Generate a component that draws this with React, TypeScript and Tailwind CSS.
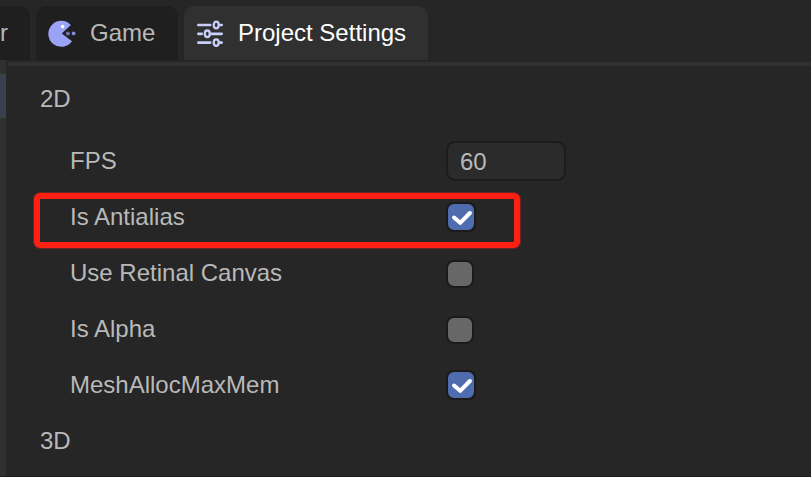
import React from "react";

function GameIcon() {
  return (
    <svg className="mt-0.5 h-[28px] w-[28px] shrink-0" viewBox="0 0 28 28">
      <path d="M13.8 13.4 L22.9 5 A13 13 0 1 0 24 21.2 Z" fill="#9aa3f5" />
      <circle cx="14.6" cy="6.6" r="1.8" fill="#fff" />
      <circle cx="19.9" cy="13.4" r="2" fill="#6f76b4" />
      <circle cx="25.6" cy="13.4" r="1.9" fill="#858ddb" />
    </svg>
  );
}

function SettingsIcon() {
  return (
    <svg
      className="mt-0.5 h-[28px] w-[28px] shrink-0"
      viewBox="0 0 28 28"
      fill="none"
      stroke="#c9cefa"
      strokeWidth="2.7"
      strokeLinecap="round"
    >
      <path d="M2.4 5H14.2M24 5H25.7M2.4 13.8H5.8M15 13.8H25.7M2.4 22.6H14.2M24 22.6H25.7" />
      <g strokeWidth="2.3">
        <ellipse cx="20.2" cy="5" rx="2.5" ry="3.3" />
        <ellipse cx="11.3" cy="13.8" rx="2.5" ry="3.3" />
        <ellipse cx="20.2" cy="22.6" rx="2.5" ry="3.3" />
      </g>
    </svg>
  );
}

function Checkbox({ checked }: { checked: boolean }) {
  if (!checked) {
    return <span className="mt-[2px] block h-7 w-7 rounded-[8px] border-2 border-[#1b1b1b] bg-[#676767]" />;
  }
  return (
    <span className="block h-[30px] w-[30px] rounded-[8px] border-2 border-[#1a1a1a] bg-[#4f6cae]">
      <svg className="h-[26px] w-[26px]" viewBox="0 0 26 26" fill="none">
        <path
          d="M6 13.5L12.2 18.8L21.9 9"
          stroke="#fff"
          strokeWidth="4"
          strokeLinecap="round"
          strokeLinejoin="round"
        />
      </svg>
    </span>
  );
}

function Row({ label, children }: { label: string; children: React.ReactNode }) {
  return (
    <div className="flex h-14 items-center pl-[62px]">
      <span className="w-[376px] shrink-0">{label}</span>
      {children}
    </div>
  );
}

export default function App() {
  return (
    <div className="relative flex h-[477px] w-[811px] flex-col overflow-hidden border-b border-[#1f1c1f] bg-[#262626] font-['Liberation_Sans',Arial,sans-serif] text-[24px] leading-7 text-[#b9b9b9]">
      <div className="flex h-[60px] shrink-0 gap-1.5 pt-1.5">
        <div className="flex w-[30px] items-center justify-end rounded-tr-[10px] bg-[#1f1f1f] pr-[22px]">r</div>
        <div className="flex w-[142px] items-center rounded-t-[10px] bg-[#1f1f1f] pl-3">
          <GameIcon />
          <span className="ml-[14px]">Game</span>
        </div>
        <div className="flex w-[244px] items-center rounded-t-[10px] bg-[#303030] pl-3 text-white">
          <SettingsIcon />
          <span className="ml-[14px] whitespace-nowrap">Project Settings</span>
        </div>
      </div>

      <div className="flex min-h-0 flex-1">
        <div className="w-1.5 shrink-0 bg-[#303030] pt-[14px]">
          <div className="h-11 bg-[#39414e]" />
        </div>
        <div className="flex-1 pl-0.5 pt-0.5">
          <div className="h-1 bg-[#303030]" />
          <div className="flex h-[67px] items-center pb-0.5 pl-8">2D</div>
          <Row label="FPS">
            <div className="flex h-10 w-[120px] items-center rounded-[9px] border-2 border-[#1c1c1c] bg-[#2b2b2b] pl-[12px] pt-0.5">
              60
            </div>
          </Row>
          <Row label="Is Antialias">
            <Checkbox checked />
          </Row>
          <Row label="Use Retinal Canvas">
            <Checkbox checked={false} />
          </Row>
          <Row label="Is Alpha">
            <Checkbox checked={false} />
          </Row>
          <Row label="MeshAllocMaxMem">
            <Checkbox checked />
          </Row>
          <div className="flex h-14 items-center pl-8">3D</div>
        </div>
      </div>

      <div className="absolute left-[34px] top-[193px] h-[55px] w-[486px] rounded-[6px] border-[6px] border-[#ff2013] outline outline-1 outline-[#ff2013]/30" />
    </div>
  );
}
